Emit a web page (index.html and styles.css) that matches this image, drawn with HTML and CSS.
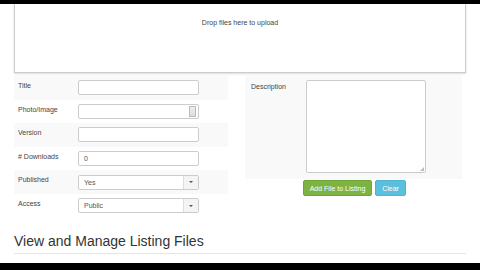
FILE: index.html
```html
<!DOCTYPE html>
<html lang="en">
<head>
    <meta charset="UTF-8">
    <meta name="viewport" content="width=device-width, initial-scale=1.0">
    <title>Listing Files</title>
    <link rel="stylesheet" href="styles.css">
</head>
<body>
    <div class="bar-top"></div>
    <div class="page">
        <div class="dropzone">Drop files here to upload</div>
        <div class="form-area">
            <div class="form-left">
                <div class="form-row">
                    <label>Title</label>
                    <div class="input"></div>
                </div>
                <div class="form-row">
                    <label>Photo/Image</label>
                    <div class="input file">
                        <span class="file-btn"></span>
                    </div>
                </div>
                <div class="form-row">
                    <label>Version</label>
                    <div class="input"></div>
                </div>
                <div class="form-row">
                    <label># Downloads</label>
                    <div class="input">0</div>
                </div>
                <div class="form-row">
                    <label>Published</label>
                    <div class="input select">Yes<span class="caret-box"><span class="caret"></span></span></div>
                </div>
                <div class="form-row">
                    <label>Access</label>
                    <div class="input select">Public<span class="caret-box"><span class="caret"></span></span></div>
                </div>
            </div>
            <div class="form-right">
                <div class="desc-row">
                    <label>Description</label>
                    <div class="textarea"><span class="grip"></span></div>
                </div>
                <div class="actions">
                    <button class="btn btn-green">Add File to Listing</button>
                    <button class="btn btn-blue">Clear</button>
                </div>
            </div>
        </div>
        <h2 class="section-title">View and Manage Listing Files</h2>
    </div>
    <div class="bar-bottom"></div>
</body>
</html>
```

FILE: styles.css
```css
body {
    margin: 0;
    padding: 0;
    width: 480px;
    height: 270px;
    overflow: hidden;
    background: #fff;
    font-family: "Liberation Sans", Arial, sans-serif;
    color: #333;
}
.bar-top {
    height: 4px;
    background: #000;
}
.bar-bottom {
    height: 7px;
    background: #000;
}
.page {
    height: 259px;
    padding: 0 14px;
    box-sizing: border-box;
    overflow: hidden;
}
.dropzone {
    height: 70px;
    margin-top: -1px;
    border: 1px solid #ccc;
    box-shadow: 0 1px 2px rgba(0, 0, 0, 0.15);
    font-size: 7px;
    color: #444;
    text-align: center;
    padding-top: 15px;
    box-sizing: border-box;
    background: #fff;
}
.form-area {
    display: flex;
    margin-top: 3px;
}
.form-left {
    width: 214px;
}
.form-row {
    display: flex;
    align-items: center;
    height: 23.6px;
    padding-left: 4px;
}
.form-row:nth-child(odd) {
    background: #f9f9f9;
}
.form-row label {
    width: 60px;
    font-size: 7px;
    color: #444;
    align-self: flex-start;
    padding-top: 6px;
}
.input {
    position: relative;
    width: 121px;
    height: 15px;
    border: 1px solid #ccc;
    border-radius: 2px;
    box-sizing: border-box;
    background: #fff;
    font-size: 7px;
    color: #555;
    padding-left: 5px;
    line-height: 13px;
}
.file-btn {
    position: absolute;
    right: 2px;
    top: 1px;
    width: 7px;
    height: 11px;
    border: 1px solid #bbb;
    box-sizing: border-box;
    background: linear-gradient(#eee, #ddd);
}
.select .caret-box {
    position: absolute;
    right: 0;
    top: 0;
    width: 14px;
    height: 13px;
    border-left: 1px solid #ddd;
    background: #f4f4f4;
    display: flex;
    align-items: center;
    justify-content: center;
}
.caret {
    width: 0;
    height: 0;
    border-left: 2px solid transparent;
    border-right: 2px solid transparent;
    border-top: 2px solid #555;
}
.form-right {
    margin-left: 17px;
    width: 217px;
}
.desc-row {
    display: flex;
    background: #f9f9f9;
    padding: 4px 0 6px 6px;
}
.desc-row label {
    width: 55px;
    font-size: 7px;
    color: #444;
    padding-top: 3px;
}
.textarea {
    position: relative;
    width: 120px;
    height: 93px;
    border: 1px solid #ccc;
    border-radius: 2px;
    box-sizing: border-box;
    background: #fff;
}
.grip {
    position: absolute;
    right: 1px;
    bottom: 1px;
    width: 0;
    height: 0;
    border-left: 4px solid transparent;
    border-bottom: 4px solid #bbb;
}
.actions {
    display: flex;
    gap: 3px;
    padding-left: 58px;
    margin-top: 1px;
}
.btn {
    height: 16px;
    border: none;
    border-radius: 2px;
    font-family: "Liberation Sans", Arial, sans-serif;
    font-size: 7px;
    color: #fff;
    padding: 0;
    white-space: nowrap;
}
.btn-green {
    width: 69px;
    background: #7cb342;
    border: 1px solid #6ea535;
}
.btn-blue {
    width: 31px;
    background: #5bc0de;
    border: 1px solid #4fb3d1;
}
.section-title {
    margin: 15px 0 0;
    font-size: 14px;
    font-weight: normal;
    color: #333;
    padding-bottom: 4px;
    border-bottom: 1px solid #e5e5e5;
}
```
